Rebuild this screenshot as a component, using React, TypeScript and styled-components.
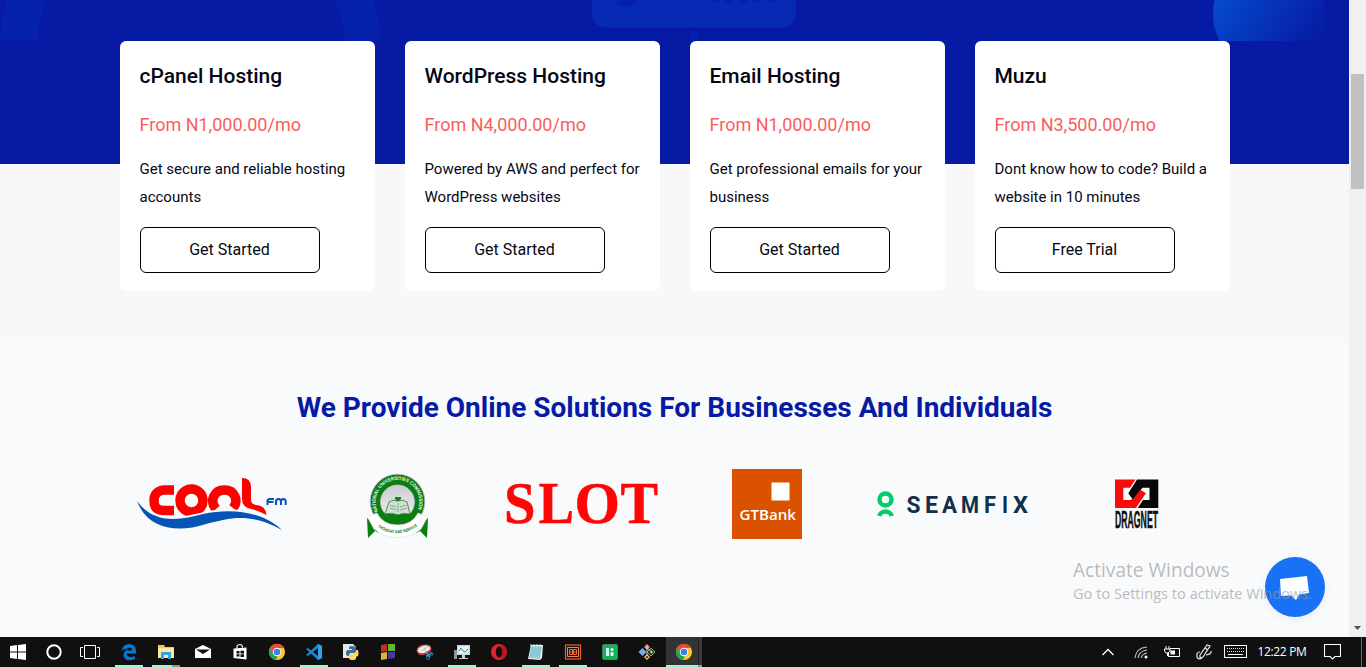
import React from "react";
import styled, { createGlobalStyle } from "styled-components";

const GlobalStyle = createGlobalStyle`
  *, *::before, *::after { box-sizing: border-box; }
  html, body { margin: 0; padding: 0; overflow: hidden; }
  body { font-family: Roboto, "Liberation Sans", sans-serif; }
  svg { display: block; flex-shrink: 0; }
`;

const Desktop = styled.div`
  position: relative;
  display: flex;
  flex-direction: column;
  width: 1366px;
  height: 667px;
  overflow: hidden;
`;

const BrowserView = styled.div`
  display: flex;
  height: 637px;
`;

const Page = styled.main`
  width: 1349px;
  height: 637px;
  overflow: hidden;
  background: #f9fafc;
`;

const HeroEdge = styled.div`
  height: 41px;
  background: #071aa4;
`;

const Services = styled.section`
  height: 300px;
  background: linear-gradient(#071aa4 123px, #f8f8f8 123px);
`;

const CardGrid = styled.div`
  display: grid;
  grid-template-columns: repeat(4, 255px);
  gap: 30px;
  width: 1110px;
  margin: 0 auto;
`;

const Card = styled.article`
  height: 250px;
  padding: 20px;
  border-radius: 6px;
  background: #fff;
  color: #060714;
`;

const CardTitle = styled.h3`
  margin: 0 0 20px;
  font-size: 21px;
  font-weight: 500;
  line-height: 30px;
  white-space: nowrap;
`;

const Price = styled.p`
  margin: 0;
  font-size: 18px;
  line-height: 28px;
  color: #f95d5d;
`;

const Description = styled.p`
  margin: 16px -10px 16px 0;
  font-size: 15px;
  line-height: 28px;
  white-space: pre-line;
`;

const CardButton = styled.button`
  display: block;
  width: 180px;
  height: 46px;
  padding: 0 0 2px;
  border: 1px solid #000;
  border-radius: 6px;
  background: #fff;
  color: #060714;
  font: 400 16px Roboto, sans-serif;
`;

const Clients = styled.section`
  padding-top: 46px;
`;

const Heading = styled.h2`
  margin: 0;
  font-size: 28px;
  font-weight: 700;
  line-height: 42px;
  text-align: center;
  color: #071aa4;
  white-space: nowrap;
`;

const LogoGrid = styled.div`
  display: grid;
  grid-template-columns: repeat(6, 185px);
  width: 1110px;
  margin: 31px auto 0;
`;

const Scrollbar = styled.div`
  display: flex;
  flex-direction: column;
  justify-content: space-between;
  align-items: center;
  width: 17px;
  height: 637px;
  padding: 74px 0 6px;
  background: #f0f0f0;
`;

const ScrollThumb = styled.div`
  width: 13px;
  height: 115px;
  background: #c1c1c1;
`;

const ChatButton = styled.button`
  position: absolute;
  left: 1265px;
  top: 557px;
  width: 60px;
  height: 60px;
  padding: 0;
  border: 0;
  border-radius: 50%;
  background: #1972f5;
  box-shadow: 0 2px 10px rgba(0, 0, 0, 0.06);
`;

const Watermark = styled.div`
  position: absolute;
  left: 1073px;
  top: 558px;
  font-family: "Open Sans", "Noto Sans", sans-serif;
  color: rgba(150, 150, 150, 0.65);
  white-space: nowrap;
`;

const WatermarkTitle = styled.div`
  font-size: 19.1px;
  line-height: 24px;
`;

const WatermarkText = styled.div`
  font-size: 14.6px;
  line-height: 22px;
`;

const Taskbar = styled.footer`
  display: flex;
  height: 30px;
  background: #101010;
`;

const SystemButtons = styled.div`
  display: flex;
  width: 110px;
`;

const SystemButton = styled.div`
  display: flex;
  align-items: center;
  justify-content: center;
  width: 36px;
  height: 30px;
`;

const Apps = styled.div`
  display: flex;
  flex: 1;
`;

const AppButton = styled.div<{ $running?: boolean; $active?: boolean; $stacked?: boolean }>`
  display: flex;
  flex-direction: column;
  align-items: center;
  width: ${(p) => (p.$active ? "36px" : "37px")};
  height: 30px;
  margin-left: ${(p) => (p.$active ? "1px" : "0")};
  padding-top: 6px;
  background: ${(p) =>
    p.$active ? "linear-gradient(90deg, #333 32px, #222 32px, #222 33px, #3a3a3a 33px)" : "transparent"};

  &::after {
    content: "";
    width: ${(p) => (p.$active ? "36px" : "28px")};
    height: 2px;
    margin-top: 4px;
    background: ${(p) =>
      !p.$running
        ? "transparent"
        : p.$stacked
          ? "linear-gradient(90deg, #9ff5cb 20px, #6eaa90 20px)"
          : p.$active
            ? "linear-gradient(90deg, #9ff5cb 32px, #6eaa90 32px)"
            : "#9ff5cb"};
  }
`;

const Tray = styled.div`
  display: flex;
  align-items: center;
  width: 267px;
  color: #fff;
`;

const TraySlot = styled.div<{ $w: number }>`
  display: flex;
  align-items: center;
  justify-content: center;
  width: ${(p) => p.$w}px;
  height: 30px;
`;

const Clock = styled.div`
  width: 60px;
  padding-bottom: 1px;
  font-family: "Open Sans", "Noto Sans", sans-serif;
  font-size: 12px;
  letter-spacing: -0.35px;
  text-align: center;
  white-space: nowrap;
`;

const ShowDesktop = styled.div`
  width: 5px;
  height: 30px;
  margin-left: auto;
  border-left: 1px solid #666;
`;

const plans = [
  { title: "cPanel Hosting", price: "From N1,000.00/mo", text: "Get secure and reliable hosting\naccounts", action: "Get Started" },
  { title: "WordPress Hosting", price: "From N4,000.00/mo", text: "Powered by AWS and perfect for\nWordPress websites", action: "Get Started" },
  { title: "Email Hosting", price: "From N1,000.00/mo", text: "Get professional emails for your\nbusiness", action: "Get Started" },
  { title: "Muzu", price: "From N3,500.00/mo", text: "Dont know how to code? Build a\nwebsite in 10 minutes", action: "Free Trial" },
];

const HeroArt = () => (
  <svg width="1349" height="41" viewBox="0 0 1349 41">
    <defs>
      <linearGradient id="orb" gradientUnits="userSpaceOnUse" x1="1215" y1="-5" x2="1300" y2="52">
        <stop offset="0" stopColor="#054ccd" />
        <stop offset="1" stopColor="#071ea6" />
      </linearGradient>
    </defs>
    <path d="M7 0Q1 20 0 41H37Q39 20 46 0ZM335 0Q343 20 345 41H381Q379 20 374 0Z" fill="#0622ac" />
    <rect x="592" y="-30" width="204" height="57.5" rx="13" fill="#072ab4" />
    <g fill="#0720ab">
      <circle cx="625" cy="-6" r="13" />
      {[715, 729, 743, 757, 771].map((x) => (
        <circle key={x} cx={x} cy="-1.5" r="4.5" />
      ))}
      <rect x="690.5" y="31" width="7" height="20" rx="3.5" />
    </g>
    <circle cx="1269" cy="14" r="56" fill="url(#orb)" />
  </svg>
);

const CoolFmLogo = () => (
  <svg width="185" height="90" viewBox="0 0 185 90">
    <g fill="none" stroke="#fe0000" strokeWidth="9.5">
      <path d="M54 30H45C37 30 34 35 34 40.500C34 47 37 50.500 44 50.500H54" />
      <circle cx="71.500" cy="40.500" r="11.500" />
      <path d="M96 49C89 41 94 30 104.500 30C115 30 119 41 113 48" />
    </g>
    <path d="M122 18Q131 18 131 27V40Q131 44 136 45Q146 46 146.500 55Q137 50 131 49Q122 47 122 39Z" fill="#fe0000" />
    <path d="M17 41C34 63 58 58 80 53C107 45 143 49 162 70C133 57 116 55 84 64C58 73 29 71 17 41Z" fill="#f9fafc" />
    <path d="M17 41C34 65 61 60 83 54C111 48 142 51 162 70C130 53 113 57 86 64C55 74 27 68 17 41Z" fill="#0654b4" />
    <g fill="none" stroke="#0654b4" strokeWidth="2">
      <path d="M147.500 45V41Q147.500 39 150 39H154M147.500 42H153.500" />
      <path d="M156 45V41.500Q156 39 158.500 39Q161 39 161 41.500V45M161 41.500Q161 39 163.300 39Q165.700 39 165.700 41.500V45" />
    </g>
  </svg>
);

const NucLogo = () => (
  <svg width="185" height="90" viewBox="0 0 185 90">
    <defs>
      <path id="nuc-top" d="M73 51.500A21.800 21.800 0 1 1 112 51.500" />
      <path id="nuc-ribbon" d="M72.500 67Q92 80 113 66" />
      <linearGradient id="nuc-disc" x2="0" y2="1">
        <stop stopColor="#cccdd4" />
        <stop offset="1" stopColor="#eeeef2" />
      </linearGradient>
    </defs>
    <circle cx="92.500" cy="41.500" r="27.300" fill="#0c7d12" stroke="#b5b9c2" strokeWidth=".8" />
    <circle cx="92.500" cy="42" r="17" fill="url(#nuc-disc)" stroke="#b9c8bd" strokeWidth=".8" />
    <path d="M80 54H105L101 59V66H86V59Z" fill="#0c7d12" />
    <path d="M84 42Q88 39 92.500 41Q98 39 102 42L105 54Q98 52 93 55Q87 52 80 54Z" fill="#d6ddd8" stroke="#168421" strokeWidth=".8" />
    <path d="M90 37H96V39L94 41H92L90 39Z" fill="#168421" />
    <path d="M85 45L91 47M95 47L101 45M85 48L91 50M95 50L102 48M93 43V52" stroke="#5fa767" strokeWidth=".8" />
    <path d="M62 58L74 68V73L70 71L63 78ZM123 58L111 68V73L115 71L122 78Z" fill="#0c7d12" />
    <path d="M62.500 57L72 53Q78 65 92.500 65Q107 65 113 53L122.500 57L116 69Q106 77.500 92.500 77.500Q79 77.500 69 69Z" fill="#fff" stroke="#dfe4e2" strokeWidth=".7" />
    <text fontFamily="Liberation Sans" fontSize="5" fontWeight="700" fill="#e9fae9">
      <textPath href="#nuc-top" textLength="86" lengthAdjust="spacingAndGlyphs">NATIONAL UNIVERSITIES COMMISSION</textPath>
    </text>
    <text fontFamily="Liberation Sans" fontSize="4.400" fontWeight="700" fill="#16741d">
      <textPath href="#nuc-ribbon" textLength="43" lengthAdjust="spacingAndGlyphs">THOUGHT AND SERVICE</textPath>
    </text>
  </svg>
);

const SlotLogo = () => (
  <svg width="185" height="90" viewBox="0 0 185 90">
    <g fontFamily="Liberation Serif" fontSize="59" fontWeight="700" fill="#fe0606" stroke="#fe0606" strokeWidth=".5">
      <text x="14" y="63" textLength="31.500" lengthAdjust="spacingAndGlyphs">S</text>
      <text x="48.500" y="63" textLength="35.500" lengthAdjust="spacingAndGlyphs">L</text>
      <text x="84.500" y="63" textLength="45.500" lengthAdjust="spacingAndGlyphs">O</text>
      <text x="130.500" y="63" textLength="37.500" lengthAdjust="spacingAndGlyphs">T</text>
    </g>
  </svg>
);

const GtBankLogo = () => (
  <svg width="185" height="90" viewBox="0 0 185 90">
    <rect x="57" y="9" width="70" height="70" fill="#da5100" />
    <rect x="96.500" y="22.500" width="18" height="18" fill="#fff" />
    <text x="64.500" y="60" fontFamily="Open Sans" fontSize="15" fontWeight="600" fill="#fff" textLength="56.500" lengthAdjust="spacingAndGlyphs">GTBank</text>
  </svg>
);

const SeamfixLogo = () => (
  <svg width="185" height="90" viewBox="0 0 185 90">
    <g fill="none" stroke="#02cc6c" strokeWidth="4.500">
      <circle cx="25.500" cy="39.500" r="6" />
      <path d="M19.300 56A6.300 5.500 0 0 1 31.700 56" />
    </g>
    <g fontFamily="Roboto" fontSize="23" fontWeight="700" fill="#12304a">
      {([["S", 46.5, 14], ["E", 65, 13], ["A", 82, 15], ["M", 101, 18], ["F", 124, 12], ["I", 142, 6], ["X", 153, 15]] as const).map(([letter, x, w]) => (
        <text key={letter} x={x} y="53" textLength={w} lengthAdjust="spacingAndGlyphs">{letter}</text>
      ))}
    </g>
  </svg>
);

const DragnetLogo = () => (
  <svg width="185" height="90" viewBox="0 0 185 90">
    <path d="M70 19.500H90.500L85 27.700H78.300V40H86L95.500 30L100.700 33.300L91 48H70Z" fill="#f70b0b" />
    <path d="M92 19.500H113.300V48H92.700L98 40H104.500V27.700H97.500L87.700 39.300L83.300 33.300Z" fill="#080808" />
    <path d="M87.500 40.500L95.500 30L100.700 33.300L91 47Z" fill="#f70b0b" />
    <text x="70" y="68.300" fontFamily="Liberation Sans" fontSize="23" fontWeight="700" fill="#111" stroke="#111" strokeWidth=".5" textLength="43" lengthAdjust="spacingAndGlyphs">DRAGNET</text>
  </svg>
);

const Icon = ({ children }: { children: React.ReactNode }) => (
  <svg width="18" height="18" viewBox="0 0 18 18">{children}</svg>
);

const ChromeIcon = () => (
  <Icon>
    <circle cx="9" cy="9" r="8" fill="#ffca28" />
    <path d="M2 5A8 8 0 0 1 16 5H9A4 4 0 0 0 5.500 11Z" fill="#e64a3d" />
    <path d="M2 5L5.500 11A4 4 0 0 0 10 13L8 17A8 8 0 0 1 2 5Z" fill="#23a455" />
    <circle cx="9" cy="9" r="4.200" fill="#fff" />
    <circle cx="9" cy="9" r="3.300" fill="#3d7eea" />
  </Icon>
);

const EdgeIcon = () => (
  <Icon>
    <path d="M1.500 8Q3 1 9.500 1Q16 1.500 16 8V10.500H6.500Q7 14 11 14Q13.500 14 15 13V16Q6 19.500 3.500 13Q3.300 8.500 8 5.500Q4 5 1.500 8ZM6.700 7.500H12Q12 4.500 9.500 4.500Q7.300 5 6.700 7.500Z" fill="#0078d7" fillRule="evenodd" />
  </Icon>
);

const FolderIcon = () => (
  <Icon>
    <path d="M1 2H7L8 4H17V15H1Z" fill="#f7c64d" />
    <path d="M1 5H17V15H1Z" fill="#ffe69a" />
    <path d="M4 16V9H14V16H11V12H7V16Z" fill="#35a6df" />
  </Icon>
);

const MailIcon = () => (
  <Icon>
    <path d="M1 6L9 2L17 6V15H1Z" fill="#fff" />
    <path d="M2 6.500H16L9 11Z" fill="#101010" />
  </Icon>
);

const StoreIcon = () => (
  <Icon>
    <path d="M2.500 5.500L15.500 4.500V16.500L2.500 15Z" fill="#fff" />
    <path d="M6 5.500V3Q7 1.500 9 1.500Q11.500 1.500 11.500 4.500" fill="none" stroke="#fff" strokeWidth="1.200" />
    <path d="M5.500 8H8.500V10.500H5.500ZM9.500 7.700H13V10.500H9.500ZM5.500 11.300H8.500V13.500H5.500ZM9.500 11.300H13V14H9.500Z" fill="#101010" />
  </Icon>
);

const VsCodeIcon = () => (
  <Icon>
    <path d="M13 1L17 3V15L13 17L1 6L3 5L13 13V5L3 13L1 12Z" fill="#1688cf" />
    <path d="M13 1L17 3V15L13 17Z" fill="#2aa4ed" />
  </Icon>
);

const PythonIcon = () => (
  <Icon>
    <path d="M1 1H11L14 4V15H1Z" fill="#e8e9e7" />
    <path d="M6 6V4Q6 3 9 3Q13 3 13 5V8Q13 10 11 10H8Q6 10 6 13H5Q3 13 3 10Q3 7 5 7H9V6Z" fill="#366f9f" transform="translate(1 0)" />
    <path d="M14 7H16Q17 9 16 13Q15 14 11 14V15H14Q14 17 11 17Q7 17 7 15V12Q7 11 9 11H12Q14 11 14 9Z" fill="#ffd754" />
  </Icon>
);

const BlocksIcon = () => (
  <Icon>
    <path d="M2 2L8 1V8L2 9Z" fill="#c42c2d" />
    <path d="M9 1H16V8L9 8Z" fill="#61b82e" />
    <path d="M2 10L8 9V16L2 17Z" fill="#d8b82d" />
    <path d="M9 9H16V15L9 16Z" fill="#4936a9" />
  </Icon>
);

const SnippingIcon = () => (
  <Icon>
    <ellipse cx="8" cy="6.500" rx="7" ry="4.300" fill="#eee" stroke="#d05050" strokeWidth="1.200" transform="rotate(-14 8 6.500)" />
    <path d="M2 9.500Q8 12 14.500 6L15 8Q9 13 3 12Z" fill="#c93838" />
    <path d="M5 8L12 4M8 4L10 9" stroke="#b6b6b6" strokeWidth=".8" />
    <path d="M10 9L14 14M16 10L10 13" stroke="#3f91cf" strokeWidth="1.500" />
    <circle cx="15.500" cy="11" r="1.500" fill="none" stroke="#2677b9" />
    <circle cx="12" cy="15" r="1.500" fill="none" stroke="#2677b9" />
  </Icon>
);

const MonitorIcon = () => (
  <Icon>
    <path d="M1 7H4V16H1Z" fill="#929898" />
    <path d="M4 2H17V12H4ZM9 12H12V15H15V16H6V15H9Z" fill="#cfd3cd" />
    <path d="M5.500 3.500H15.500V10.500H5.500Z" fill="#e8faff" />
    <path d="M6 8L8 5L10 8L12 9L15 6" fill="none" stroke="#2987ac" />
  </Icon>
);

const OperaIcon = () => (
  <Icon>
    <circle cx="9" cy="9" r="8" fill="#e52131" />
    <path d="M11 2Q17 4 17 9Q17 14 11 16Z" fill="#b91522" />
    <ellipse cx="9" cy="9" rx="3.200" ry="5.700" fill="#101010" />
  </Icon>
);

const NotepadIcon = () => (
  <Icon>
    <path d="M4 2H16L15 15L13 17L1 16Z" fill="#edf4ef" />
    <path d="M4 3H15L13 16L2 15Z" fill="#94cbd9" />
    <path d="M4 1V4M7 1V4M10 1V4M13 1V4" stroke="#d4e9eb" />
    <path d="M4 6H14M4 9H13M3 12H13" stroke="#70adbd" strokeWidth=".5" />
  </Icon>
);

const BracketsIcon = () => (
  <Icon>
    <rect x="1.500" y="2" width="15" height="14" fill="#17110c" stroke="#f4601b" strokeWidth="1.200" />
    <path d="M3.500 4.500H14.500V13.500H3.500Z" fill="none" stroke="#d9a184" strokeWidth=".9" />
    <path d="M5.500 6.500H8.500V11.500H5.500ZM9.500 6.500H12.500V11.500H9.500ZM5.500 9H12.500" fill="none" stroke="#ff6a1e" />
  </Icon>
);

const GreenIcon = () => (
  <Icon>
    <rect x="1.500" y="1.500" width="15" height="15" rx="1" fill="#12b45a" stroke="#3f7f5c" />
    <path d="M5 5H8V13H5Z" fill="#e2fff0" />
    <circle cx="11" cy="6.500" r="1.500" fill="#e2fff0" />
    <rect x="9.500" y="9" width="3" height="4" rx="1" fill="#e2fff0" />
  </Icon>
);

const GitIcon = () => (
  <Icon>
    <path d="M9 1L12 4L9 7L6 4Z" fill="#ec8681" />
    <path d="M4.500 5L8.500 9L4.500 13L.5 9Z" fill="#7dabed" />
    <path d="M13 5L17 9L13 13L9 9Z" fill="#26351f" stroke="#91cb78" strokeWidth=".8" />
    <path d="M9 11L12 14L9 17L6 14Z" fill="#ecc54d" />
    <path d="M9 3V15M9 5L14 9" fill="none" stroke="#f3d8ca" strokeWidth=".8" />
    <circle cx="9" cy="14" r="1.100" fill="#222" />
    <circle cx="13.500" cy="9" r="1.200" fill="#b8e59e" />
  </Icon>
);

const apps = [
  { id: "edge", icon: <EdgeIcon />, running: true },
  { id: "explorer", icon: <FolderIcon />, running: true, stacked: true },
  { id: "mail", icon: <MailIcon /> },
  { id: "store", icon: <StoreIcon /> },
  { id: "chrome", icon: <ChromeIcon /> },
  { id: "vscode", icon: <VsCodeIcon />, running: true },
  { id: "python", icon: <PythonIcon /> },
  { id: "blocks", icon: <BlocksIcon /> },
  { id: "snip", icon: <SnippingIcon /> },
  { id: "monitor", icon: <MonitorIcon />, running: true },
  { id: "opera", icon: <OperaIcon /> },
  { id: "notepad", icon: <NotepadIcon />, running: true },
  { id: "brackets", icon: <BracketsIcon />, running: true },
  { id: "green", icon: <GreenIcon /> },
  { id: "git", icon: <GitIcon /> },
  { id: "chrome-window", icon: <ChromeIcon />, running: true, active: true },
];

export default function App() {
  return (
    <Desktop>
      <GlobalStyle />
      <BrowserView>
        <Page>
          <HeroEdge>
            <HeroArt />
          </HeroEdge>
          <Services>
            <CardGrid>
              {plans.map((plan) => (
                <Card key={plan.title}>
                  <CardTitle>{plan.title}</CardTitle>
                  <Price>{plan.price}</Price>
                  <Description>{plan.text}</Description>
                  <CardButton>{plan.action}</CardButton>
                </Card>
              ))}
            </CardGrid>
          </Services>
          <Clients>
            <Heading>We Provide Online Solutions For Businesses And Individuals</Heading>
            <LogoGrid>
              <CoolFmLogo />
              <NucLogo />
              <SlotLogo />
              <GtBankLogo />
              <SeamfixLogo />
              <DragnetLogo />
            </LogoGrid>
          </Clients>
        </Page>
        <Scrollbar>
          <ScrollThumb />
          <svg width="7" height="5" viewBox="0 0 7 5">
            <path d="M0 0H7L3.500 4Z" fill="#505050" />
          </svg>
        </Scrollbar>
      </BrowserView>
      <ChatButton aria-label="Open chat">
        <svg width="60" height="60" viewBox="0 0 60 60">
          <path d="M15 22L42 19L44 36L34 37.500L31 43L26 38.500L16 39Z" fill="#fff" />
        </svg>
      </ChatButton>
      <Watermark>
        <WatermarkTitle>Activate Windows</WatermarkTitle>
        <WatermarkText>Go to Settings to activate Windows.</WatermarkText>
      </Watermark>
      <Taskbar>
        <SystemButtons>
          <SystemButton>
            <Icon>
              <path d="M1 3L8 2V8.500H1ZM9 2L17 1V8.500H9ZM1 9.500H8V16L1 15ZM9 9.500H17V17L9 16Z" fill="#fff" />
            </Icon>
          </SystemButton>
          <SystemButton>
            <Icon>
              <circle cx="9" cy="9" r="6.700" fill="none" stroke="#fff" strokeWidth="2" />
            </Icon>
          </SystemButton>
          <SystemButton>
            <svg width="20" height="16" viewBox="0 0 20 16">
              <path d="M4.500 1.500H15.500V14.500H4.500ZM3 3.500H.5V12.500H3M17 3.500H19.500V12.500H17" fill="none" stroke="#fff" />
            </svg>
          </SystemButton>
        </SystemButtons>
        <Apps>
          {apps.map((app) => (
            <AppButton key={app.id} $running={app.running} $active={app.active} $stacked={app.stacked}>
              {app.icon}
            </AppButton>
          ))}
        </Apps>
        <Tray>
          <TraySlot $w={18}>
            <svg width="12" height="8" viewBox="0 0 12 8">
              <path d="M.5 7L6 1.500L11.500 7" fill="none" stroke="#fff" strokeWidth="1.300" />
            </svg>
          </TraySlot>
          <TraySlot $w={48}>
            <Icon>
              <g fill="none" stroke="#c4c4c4" strokeWidth="1.100">
                <path d="M3 15Q4 5 15 4M6 15Q7 8 15 7M9 15Q10 11 15 10" />
              </g>
              <circle cx="14" cy="14" r="1.500" fill="#fff" />
            </Icon>
          </TraySlot>
          <TraySlot $w={13}>
            <svg width="18" height="18" viewBox="0 0 18 18">
              <path d="M7 5.500H16.500V13.500H5.500V10M3 3V6M6 3V6M1.500 6H7V8L5 10H3L1.500 8ZM4.500 10V13" fill="none" stroke="#fff" />
              <path d="M7.500 7.500H12V11.500H7.500Z" fill="#fff" />
            </svg>
          </TraySlot>
          <TraySlot $w={51}>
            <Icon>
              <path d="M5 12L12 2L15 3L8 14L5 15ZM5 9Q1 9 2 14Q3 17 7 15M11 12Q17 11 16 8M10 5L13 7" fill="none" stroke="#e8e8e8" strokeWidth="1.200" />
            </Icon>
          </TraySlot>
          <TraySlot $w={12}>
            <svg width="23" height="14" viewBox="0 0 23 14">
              <rect x=".5" y=".5" width="22" height="12" fill="none" stroke="#fff" />
              <path d="M3 3.500H20M3 6.500H20" stroke="#ddd" strokeDasharray="1 1" />
              <path d="M4 9.500H19" stroke="#fff" />
            </svg>
          </TraySlot>
          <TraySlot $w={11} />
          <Clock>12:22 PM</Clock>
          <TraySlot $w={41}>
            <svg width="17" height="18" viewBox="0 0 17 18">
              <path d="M.5 1.500H16.500V13.500H11L8.500 16L6 13.500H.5Z" fill="none" stroke="#fff" strokeWidth="1.100" />
            </svg>
          </TraySlot>
          <ShowDesktop />
        </Tray>
      </Taskbar>
    </Desktop>
  );
}
